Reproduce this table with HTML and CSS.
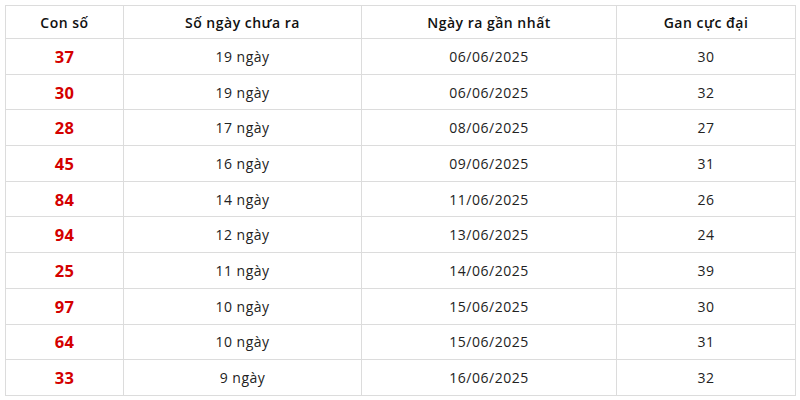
FILE: index.html
```html
<!DOCTYPE html>
<html lang="vi">
<head>
<meta charset="utf-8">
<link rel="stylesheet" href="styles.css">
</head>
<body>
<table class="gan-table">
  <colgroup>
    <col class="c1"><col class="c2"><col class="c3"><col class="c4">
  </colgroup>
  <thead>
    <tr><th>Con số</th><th>Số ngày chưa ra</th><th>Ngày ra gần nhất</th><th>Gan cực đại</th></tr>
  </thead>
  <tbody>
    <tr><td class="num">37</td><td>19 ngày</td><td>06/06/2025</td><td>30</td></tr>
    <tr><td class="num">30</td><td>19 ngày</td><td>06/06/2025</td><td>32</td></tr>
    <tr><td class="num">28</td><td>17 ngày</td><td>08/06/2025</td><td>27</td></tr>
    <tr><td class="num">45</td><td>16 ngày</td><td>09/06/2025</td><td>31</td></tr>
    <tr><td class="num">84</td><td>14 ngày</td><td>11/06/2025</td><td>26</td></tr>
    <tr><td class="num">94</td><td>12 ngày</td><td>13/06/2025</td><td>24</td></tr>
    <tr><td class="num">25</td><td>11 ngày</td><td>14/06/2025</td><td>39</td></tr>
    <tr><td class="num">97</td><td>10 ngày</td><td>15/06/2025</td><td>30</td></tr>
    <tr><td class="num">64</td><td>10 ngày</td><td>15/06/2025</td><td>31</td></tr>
    <tr><td class="num">33</td><td>9 ngày</td><td>16/06/2025</td><td>32</td></tr>
  </tbody>
</table>
</body>
</html>
```
FILE: styles.css
```css
html, body {
  margin: 0;
  padding: 0;
  background: #fff;
}
body {
  padding: 5px;
  font-family: "Open Sans", "Noto Sans", sans-serif;
}
.gan-table {
  width: 790px;
  border-collapse: collapse;
  table-layout: fixed;
}
.c1 { width: 118px; }
.c2 { width: 238px; }
.c3 { width: 255px; }
.c4 { width: 179px; }
.gan-table th,
.gan-table td {
  border: 1px solid #dcdcdc;
  text-align: center;
  padding: 0;
  letter-spacing: 0.5px;
}
.gan-table th {
  height: 32px;
  font-size: 14px;
  font-weight: 600;
  color: #111;
}
.gan-table td {
  height: 34.7px;
  font-size: 14px;
  color: #222;
}
.gan-table td.num {
  font-size: 16.5px;
  font-weight: 700;
  color: #d40000;
  letter-spacing: 0.3px;
}
```
